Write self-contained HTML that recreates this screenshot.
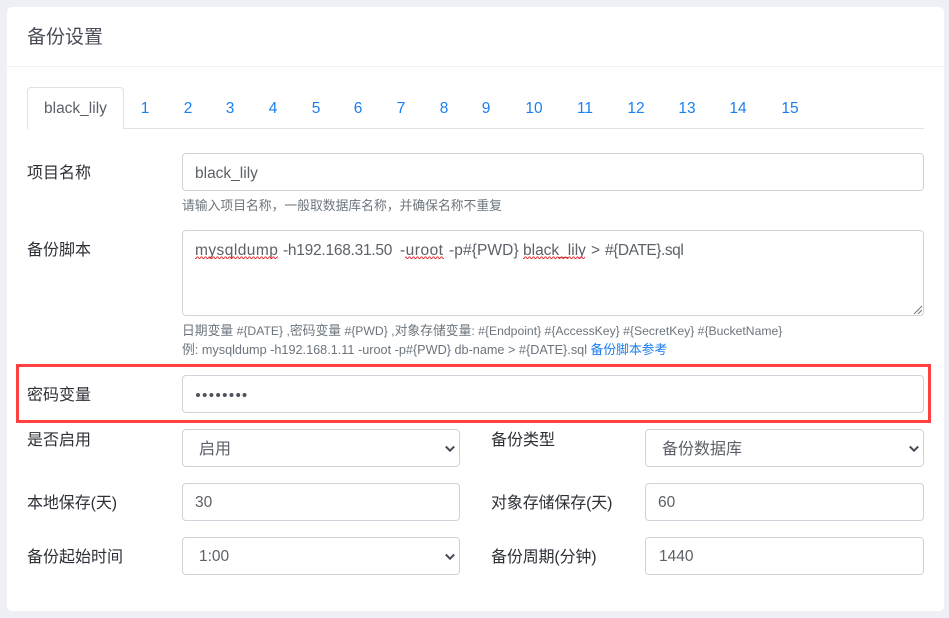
<!DOCTYPE html>
<html lang="zh">
<head>
<meta charset="utf-8">
<style>
html,body{margin:0;padding:0;width:949px;height:618px;overflow:hidden;background:#eff0f6;}
body{position:relative;font-family:"Liberation Sans","Noto Sans CJK SC",sans-serif;font-size:16px;color:#3f4254;}
div{box-sizing:border-box;}
.abs,.t,.f,.l,.s,.tab,.v{position:absolute;}
.card{position:absolute;left:7px;top:7px;width:937px;height:604px;background:#fff;border-radius:5px;}
.hr{position:absolute;left:7px;top:66px;width:937px;height:1px;background:#eff0f6;}
.t{white-space:nowrap;}
.l{left:27px;white-space:nowrap;font-size:16px;line-height:22px;color:#2e3038;}
.f{background:#fff;border:1px solid #d0d3dc;border-radius:4px;height:38px;}
.v{color:#5c6068;font-size:15.5px;line-height:20px;white-space:nowrap;}
.c{font-size:16px;}
.s{color:#6c757d;font-size:12.2px;line-height:18px;white-space:nowrap;}
.s b{font-weight:normal;font-size:12.8px;}
.tab{top:99px;color:#1a7ff0;font-size:15.5px;line-height:20px;width:40px;text-align:center;}
.chev{position:absolute;width:12px;height:8px;}
</style>
</head>
<body>
<div class="card"></div>
<div class="hr"></div>
<div class="t" style="left:27px;top:25px;font-size:19px;line-height:26px;color:#4a4d57;">备份设置</div>

<div class="abs" style="left:27px;top:128px;width:897px;height:1px;background:#dee2e6;"></div>
<div class="abs" style="left:27px;top:87px;width:97px;height:42px;background:#fff;border:1px solid #dee2e6;border-bottom:none;border-radius:4px 4px 0 0;"></div>
<div class="t" style="left:44px;top:99px;font-size:15.5px;line-height:20px;color:#5c6068;">black_lily</div>
<div class="tab" style="left:125px;">1</div>
<div class="tab" style="left:168px;">2</div>
<div class="tab" style="left:210px;">3</div>
<div class="tab" style="left:253px;">4</div>
<div class="tab" style="left:296px;">5</div>
<div class="tab" style="left:338px;">6</div>
<div class="tab" style="left:381px;">7</div>
<div class="tab" style="left:424px;">8</div>
<div class="tab" style="left:466px;">9</div>
<div class="tab" style="left:514px;">10</div>
<div class="tab" style="left:565px;">11</div>
<div class="tab" style="left:616px;">12</div>
<div class="tab" style="left:667px;">13</div>
<div class="tab" style="left:718px;">14</div>
<div class="tab" style="left:770px;">15</div>

<div class="l" style="top:163px;">项目名称</div>
<div class="f" style="left:182px;top:153px;width:742px;"></div>
<div class="v" style="left:195px;top:164px;">black_lily</div>
<div class="s" style="left:182px;top:197px;"><b>请输入项目名称，一般取数据库名称，并确保名称不重复</b></div>

<div class="l" style="top:240px;">备份脚本</div>
<div class="f" style="left:182px;top:230px;width:742px;height:86px;"></div>
<div class="v" style="left:195px;top:241px;letter-spacing:.45px;">mysqldump</div>
<div class="v" style="left:283px;top:241px;letter-spacing:-.25px;">-h192.168.31.50</div>
<div class="v" style="left:400px;top:241px;letter-spacing:.5px;">-uroot</div>
<div class="v" style="left:449px;top:241px;letter-spacing:.1px;">-p#{PWD}</div>
<div class="v" style="left:523px;top:241px;">black_lily</div>
<div class="v" style="left:591px;top:241px;">&gt;</div>
<div class="v" style="left:605px;top:241px;letter-spacing:-.45px;">#{DATE}.sql</div>
<svg class="abs" style="left:0;top:256px;" width="949" height="4" viewBox="0 0 949 4">
<defs><pattern id="w" width="4" height="3" patternUnits="userSpaceOnUse"><path d="M0 2.5L1 1 2 1 3 2.5 4 2.5" fill="none" stroke="#e8323a" stroke-width=".9"/></pattern></defs>
<rect x="195" y="0" width="83" height="3" fill="url(#w)"/>
<rect x="405" y="0" width="39" height="3" fill="url(#w)"/>
<rect x="523" y="0" width="62" height="3" fill="url(#w)"/>
</svg>
<svg class="abs" style="left:913px;top:305px;" width="10" height="10" viewBox="0 0 10 10"><path d="M1 9L9 1M5 9L9 5" stroke="#777" stroke-width="1" fill="none"/></svg>
<div class="s" style="left:182px;top:322px;"><b>日期变量</b> #{DATE} ,<b>密码变量</b> #{PWD} ,<b>对象存储变量</b>: #{Endpoint} #{AccessKey} #{SecretKey} #{BucketName}</div>
<div class="s" style="left:182px;top:341px;font-size:12.68px;"><b>例</b>: mysqldump -h192.168.1.11 -uroot -p#{PWD} db-name &gt; #{DATE}.sql <b style="color:#1a7ff0;">备份脚本参考</b></div>

<div class="abs" style="left:16px;top:364px;width:915px;height:59px;border:3px solid #ff4040;"></div>
<div class="l" style="top:385px;">密码变量</div>
<div class="f" style="left:182px;top:375px;width:742px;"></div>
<svg class="abs" style="left:194px;top:392px;" width="54" height="6" viewBox="0 0 54 6"><g fill="#4f535c"><circle cx="4" cy="3" r="2"/><circle cx="10.7" cy="3" r="2"/><circle cx="17.4" cy="3" r="2"/><circle cx="24.1" cy="3" r="2"/><circle cx="30.8" cy="3" r="2"/><circle cx="37.5" cy="3" r="2"/><circle cx="44.2" cy="3" r="2"/><circle cx="50.5" cy="3" r="2"/></g></svg>

<div class="l" style="top:430px;">是否启用</div>
<div class="f" style="left:182px;top:429px;width:278px;"></div>
<div class="v c" style="left:199px;top:440px;">启用</div>
<svg class="chev" style="left:444px;top:445px;" viewBox="0 0 12 8"><path d="M1.8 1.5L6 5.7 10.2 1.5" fill="none" stroke="#4a4d57" stroke-width="2"/></svg>
<div class="l" style="left:491px;top:430px;">备份类型</div>
<div class="f" style="left:645px;top:429px;width:279px;"></div>
<div class="v c" style="left:662px;top:440px;">备份数据库</div>
<svg class="chev" style="left:908px;top:445px;" viewBox="0 0 12 8"><path d="M1.8 1.5L6 5.7 10.2 1.5" fill="none" stroke="#4a4d57" stroke-width="2"/></svg>

<div class="l" style="top:493px;letter-spacing:-.1px;">本地保存(天)</div>
<div class="f" style="left:182px;top:483px;width:278px;"></div>
<div class="v" style="left:195px;top:493px;">30</div>
<div class="l" style="left:491px;top:493px;letter-spacing:-.15px;">对象存储保存(天)</div>
<div class="f" style="left:645px;top:483px;width:279px;"></div>
<div class="v" style="left:658px;top:493px;">60</div>

<div class="l" style="top:547px;">备份起始时间</div>
<div class="f" style="left:182px;top:537px;width:278px;"></div>
<div class="v" style="left:199px;top:547px;">1:00</div>
<svg class="chev" style="left:444px;top:553px;" viewBox="0 0 12 8"><path d="M1.8 1.5L6 5.7 10.2 1.5" fill="none" stroke="#4a4d57" stroke-width="2"/></svg>
<div class="l" style="left:491px;top:547px;letter-spacing:-.15px;">备份周期(分钟)</div>
<div class="f" style="left:645px;top:537px;width:279px;"></div>
<div class="v" style="left:659px;top:547px;">1440</div>
</body>
</html>
